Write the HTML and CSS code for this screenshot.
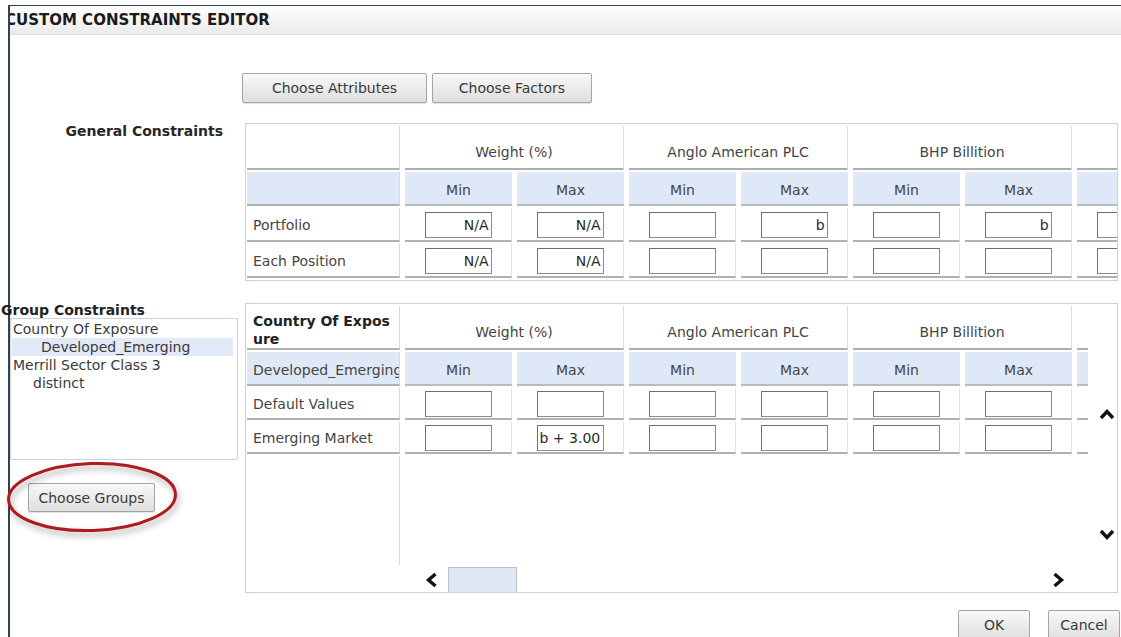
FILE: index.html
```html
<!DOCTYPE html>
<html lang="en">
<head>
<meta charset="utf-8">
<title>Custom Constraints Editor</title>
<link rel="stylesheet" href="styles.css">
</head>
<body>
<div class="window">
  <div class="titlebar">CUSTOM CONSTRAINTS EDITOR</div>

  <div class="editor">
    <div class="toolbar">
      <button class="btn btn-attr">Choose Attributes</button>
      <button class="btn btn-factor">Choose Factors</button>
    </div>

    <div class="side-label">General Constraints</div>
    <div class="grid-box general-box">
      <table class="grid">
        <colgroup>
          <col class="c-label">
          <col class="c-val"><col class="c-val"><col class="c-val"><col class="c-val">
          <col class="c-val"><col class="c-val"><col class="c-val"><col class="c-val">
        </colgroup>
        <thead>
          <tr class="grp-row">
            <th class="row-label"></th>
            <th colspan="2" class="grp">Weight (%)</th>
            <th colspan="2" class="grp">Anglo American PLC</th>
            <th colspan="2" class="grp">BHP Billition</th>
            <th colspan="2" class="grp"></th>
          </tr>
          <tr class="sub-row">
            <th class="row-label"></th>
            <th>Min</th><th>Max</th><th>Min</th><th>Max</th>
            <th>Min</th><th>Max</th><th></th><th></th>
          </tr>
        </thead>
        <tbody>
          <tr>
            <td class="row-label">Portfolio</td>
            <td><input class="cell-input" value="N/A"></td>
            <td><input class="cell-input" value="N/A"></td>
            <td><input class="cell-input" value=""></td>
            <td><input class="cell-input" value="b"></td>
            <td><input class="cell-input" value=""></td>
            <td><input class="cell-input" value="b"></td>
            <td><input class="cell-input" value=""></td>
            <td><input class="cell-input" value=""></td>
          </tr>
          <tr>
            <td class="row-label">Each Position</td>
            <td><input class="cell-input" value="N/A"></td>
            <td><input class="cell-input" value="N/A"></td>
            <td><input class="cell-input" value=""></td>
            <td><input class="cell-input" value=""></td>
            <td><input class="cell-input" value=""></td>
            <td><input class="cell-input" value=""></td>
            <td><input class="cell-input" value=""></td>
            <td><input class="cell-input" value=""></td>
          </tr>
        </tbody>
      </table>
    </div>

    <div class="group-side">
      <div class="side-title">Group Constraints</div>
      <ul class="group-list">
        <li>Country Of Exposure</li>
        <li class="child selected">Developed_Emerging</li>
        <li>Merrill Sector Class 3</li>
        <li class="child leaf">distinct</li>
      </ul>
      <button class="btn btn-groups">Choose Groups</button>
      <svg class="callout" width="180" height="84" viewBox="0 0 180 84" aria-hidden="true">
        <ellipse cx="87" cy="39" rx="83.5" ry="33.5" transform="rotate(-2 87 39)" fill="none" stroke="#b0191f" stroke-width="3"/>
      </svg>
    </div>

    <div class="grid-box group-box">
      <div class="viewport">
        <table class="grid grid-compact">
          <colgroup>
            <col class="c-label">
            <col class="c-val"><col class="c-val"><col class="c-val"><col class="c-val">
            <col class="c-val"><col class="c-val"><col class="c-val"><col class="c-val">
          </colgroup>
          <thead>
            <tr class="grp-row">
              <th class="row-label group-name">Country Of Exposure</th>
              <th colspan="2" class="grp">Weight (%)</th>
              <th colspan="2" class="grp">Anglo American PLC</th>
              <th colspan="2" class="grp">BHP Billition</th>
              <th colspan="2" class="grp"></th>
            </tr>
            <tr class="sub-row">
              <th class="row-label"><div class="clip">Developed_Emerging</div></th>
              <th>Min</th><th>Max</th><th>Min</th><th>Max</th>
              <th>Min</th><th>Max</th><th></th><th></th>
            </tr>
          </thead>
          <tbody>
            <tr>
              <td class="row-label">Default Values</td>
              <td><input class="cell-input" value=""></td>
              <td><input class="cell-input" value=""></td>
              <td><input class="cell-input" value=""></td>
              <td><input class="cell-input" value=""></td>
              <td><input class="cell-input" value=""></td>
              <td><input class="cell-input" value=""></td>
              <td><input class="cell-input" value=""></td>
              <td><input class="cell-input" value=""></td>
            </tr>
            <tr>
              <td class="row-label">Emerging Market</td>
              <td><input class="cell-input" value=""></td>
              <td><input class="cell-input left" value="b + 3.000"></td>
              <td><input class="cell-input" value=""></td>
              <td><input class="cell-input" value=""></td>
              <td><input class="cell-input" value=""></td>
              <td><input class="cell-input" value=""></td>
              <td><input class="cell-input" value=""></td>
              <td><input class="cell-input" value=""></td>
            </tr>
            <tr class="filler">
              <td class="row-label"></td>
              <td colspan="8"></td>
            </tr>
          </tbody>
        </table>
      </div>
      <div class="vscroll">
        <svg class="chev" width="16" height="11" viewBox="0 0 16 11"><polyline points="2,9 8,2.5 14,9"/></svg>
        <svg class="chev chev-down" width="16" height="11" viewBox="0 0 16 11"><polyline points="2,2 8,8.5 14,2"/></svg>
      </div>
      <div class="hscroll">
        <svg class="chev chev-left" width="13" height="16" viewBox="0 0 13 16"><polyline points="10.5,2 3.5,8 10.5,14"/></svg>
        <div class="thumb"></div>
        <svg class="chev chev-right" width="13" height="16" viewBox="0 0 13 16"><polyline points="2.5,2 9.5,8 2.5,14"/></svg>
      </div>
    </div>

    <div class="footer">
      <button class="btn btn-dialog">OK</button>
      <button class="btn btn-dialog">Cancel</button>
    </div>
  </div>
</div>
</body>
</html>
```

FILE: styles.css
```css
* { box-sizing: border-box; }

html, body {
  margin: 0;
  background: #fff;
}

body {
  font-family: "DejaVu Sans", Verdana, sans-serif;
  font-size: 14px;
  color: #404040;
  overflow: hidden;
}

/* dialog frame */
.window {
  margin: 5px 0 0 8px;
  height: 632px;
  border-top: 1px solid #34414f;
  border-left: 2px solid #34414f;
}

.titlebar {
  height: 29px;
  overflow: hidden;
  white-space: nowrap;
  text-indent: -5px;
  font-size: 15px;
  font-weight: bold;
  line-height: 28px;
  color: #1b1b1b;
  background: linear-gradient(#fefefe, #ebebeb);
  border-bottom: 1px solid #dcdcdc;
}

.editor {
  display: grid;
  grid-template-columns: 235px 873px 3px;
  padding-top: 38px;
}

/* buttons */
.btn {
  font-family: "DejaVu Sans", Verdana, sans-serif;
  font-size: 14px;
  color: #3a3a3a;
  height: 30px;
  padding: 0;
  background: linear-gradient(#f8f8f8, #dfdfdf);
  border: 1px solid #a4a4a4;
  border-radius: 2px;
  box-shadow: 0 1px 1px rgba(0, 0, 0, 0.12);
}

.toolbar {
  grid-column: 2;
  margin-left: -3px;
  display: flex;
  gap: 5px;
}

.btn-attr { width: 185px; }
.btn-factor { width: 160px; }

.side-label {
  grid-column: 1;
  margin-top: 20px;
  padding-right: 22px;
  text-align: right;
  font-weight: bold;
  line-height: 16px;
  color: #262626;
}

/* bordered table panels */
.grid-box {
  grid-column: 2;
  border: 1px solid #cbd3e2;
  overflow: hidden;
}

.general-box {
  margin-top: 20px;
  height: 158px;
}

.group-box {
  margin-top: 22px;
  height: 290px;
  display: grid;
  grid-template-columns: 842px 1fr;
  grid-template-rows: 261px 1fr;
}

.grid {
  margin-left: -4px;
  width: 1059px;
  table-layout: fixed;
  border-collapse: separate;
  border-spacing: 5px 2px;
}

.c-label { width: 153px; }
.c-val { width: 107px; }

.grid th,
.grid td {
  padding: 0;
  font-weight: normal;
  color: #454545;
}

.grid .row-label {
  text-align: left;
  padding-left: 6px;
  border-right: 1px solid #d6d9de;
  border-bottom: 2px solid #b1b1b1;
}

.grp-row th {
  text-align: center;
  line-height: 18px;
  padding: 17px 0 7px;
  border-bottom: 2px solid #adadad;
  border-right: 1px solid #dedede;
}

.sub-row th {
  text-align: center;
  line-height: 18px;
  padding: 9px 0 5px;
  background: #dfe8f6;
  border-bottom: 2px solid #b7bcc4;
}

.sub-row th.row-label { background: #dfe8f6; }

.grid tbody td {
  text-align: center;
  vertical-align: middle;
  padding: 4px 0 2px;
  border-bottom: 2px solid #b1b1b1;
  border-right: 1px solid #e3e3e3;
}

.grid-compact tbody td { padding: 3px 0 1px; }

.grid th.group-name {
  vertical-align: top;
  padding: 6px 4px 0 6px;
  font-weight: bold;
  color: #222;
  text-align: left;
  word-break: break-all;
}

.clip {
  overflow: hidden;
  white-space: nowrap;
}

.grid tbody tr.filler td {
  height: 130px;
  border-bottom: none;
  border-right: none;
}

.grid tbody tr.filler td.row-label {
  border-right: 1px solid #d6d9de;
}

.cell-input {
  display: block;
  margin: 0 auto;
  width: 67px;
  height: 26px;
  padding: 0 2px;
  font-family: "DejaVu Sans", Verdana, sans-serif;
  font-size: 14px;
  color: #2a2a2a;
  text-align: right;
  background: #fff;
  border: 1px solid #8c8c8c;
  border-top-color: #6f6f6f;
  border-left-color: #6f6f6f;
  outline: none;
}

.cell-input.left { text-align: left; }

/* scroll controls of the group grid */
.viewport {
  overflow: hidden;
}

.vscroll {
  display: flex;
  flex-direction: column;
  padding: 105px 0 0 11px;
}

.chev {
  display: block;
  fill: none;
  stroke: #111;
  stroke-width: 3.4;
}

.chev-down { margin-top: 109px; }

.hscroll {
  grid-column: 1;
  display: flex;
  align-items: flex-start;
}

.chev-left {
  margin: 7px 0 0 179px;
}

.thumb {
  margin: 2px 0 0 10px;
  width: 69px;
  height: 25px;
  background: #dfe7f5;
  border: 1px solid #b9c1cd;
  border-bottom: none;
}

.chev-right {
  margin: 7px 23px 0 auto;
}

/* group list column */
.group-side {
  grid-column: 1;
  margin-top: 22px;
  position: relative;
}

.side-title {
  margin-left: -9px;
  font-weight: bold;
  line-height: 15px;
  color: #222;
}

.group-list {
  list-style: none;
  margin: 0;
  width: 228px;
  height: 142px;
  padding: 1px 0;
  border: 1px solid #c9d3e4;
}

.group-list li {
  line-height: 18px;
  padding-left: 2px;
  color: #3a3a3a;
  white-space: nowrap;
}

.group-list li.child { padding-left: 30px; }
.group-list li.leaf { padding-left: 22px; }

.group-list li.selected {
  margin: 0 4px 0 1px;
  padding-left: 29px;
  background: #e2eaf7;
}

.btn-groups {
  display: block;
  margin: 23px 0 0 18px;
  width: 127px;
  height: 29px;
}

.callout {
  position: absolute;
  left: -5px;
  top: 155px;
  overflow: visible;
  filter: drop-shadow(2px 4px 3px rgba(0, 0, 0, 0.35));
}

/* dialog buttons */
.footer {
  grid-column: 1 / -1;
  margin-top: 17px;
  display: flex;
  justify-content: flex-end;
  gap: 18px;
  padding-right: 1px;
}

.btn-dialog { width: 72px; }
```
